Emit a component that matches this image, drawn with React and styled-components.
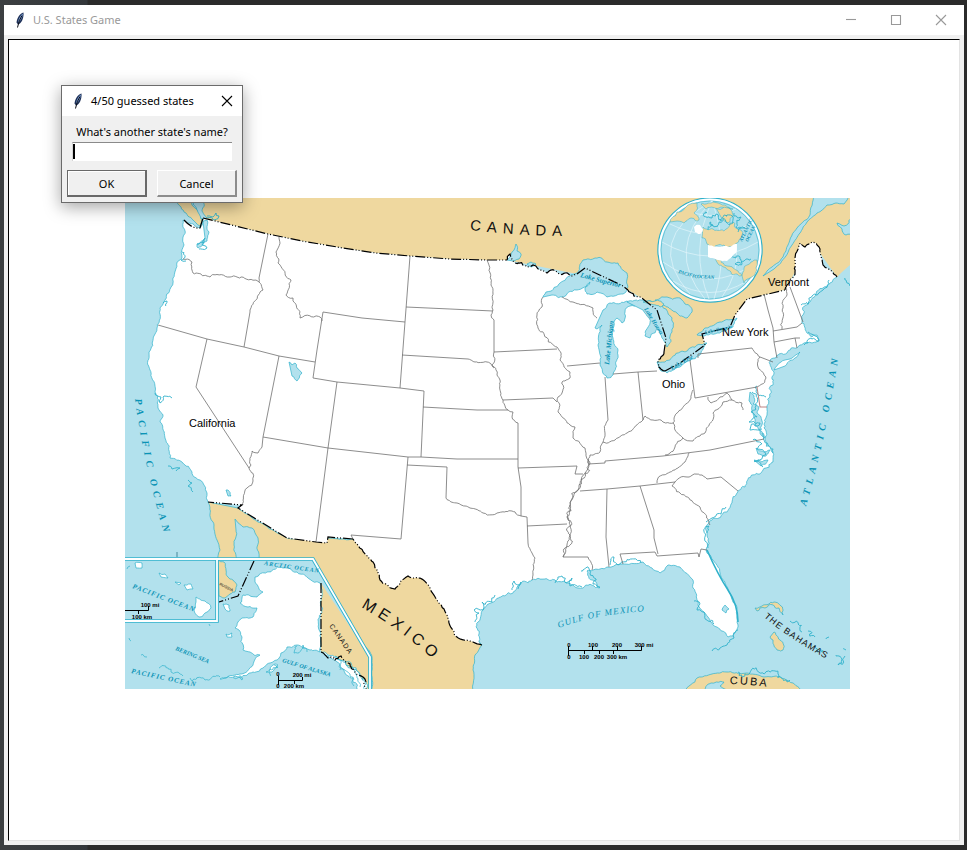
import React from "react";
import styled, { createGlobalStyle } from "styled-components";

const SEA = "#b2e1ed";
const LAND = "#efd89f";
const COAST = "#2fb1cb";
const LABEL_BLUE = "#0b93b5";

const GlobalStyle = createGlobalStyle`
  * { box-sizing: border-box; }
  body { margin: 0; background: #2b2b2b; }
`;

/* ---------- geometry helpers ---------- */

const parse = (text) => text.trim().split(/\s+/).map((pair) => pair.split(",").map(Number));

const noise = (x, y) => {
  const value = Math.sin(x * 12.9898 + y * 78.233) * 43758.5453;
  return (value - Math.floor(value)) * 2 - 1;
};

// Splits every segment into shorter, slightly displaced ones, as on a natural shore or river.
const rough = (text, amount = 0.22) => {
  const points = parse(text);
  const result = [points[0]];
  const split = (a, b) => {
    const length = Math.hypot(b[0] - a[0], b[1] - a[1]);
    if (length < 3) {
      result.push(b);
      return;
    }
    const x = (a[0] + b[0]) / 2;
    const y = (a[1] + b[1]) / 2;
    const reach = Math.min(length, 12) * amount;
    const middle = [x + noise(x, y) * reach, y + noise(y, x) * reach];
    split(a, middle);
    split(middle, b);
  };
  for (let i = 1; i < points.length; i += 1) split(points[i - 1], points[i]);
  return result;
};

const join = (points, closed) =>
  "M" + points.map(([x, y]) => `${x.toFixed(1)} ${y.toFixed(1)}`).join("L") + (closed ? "Z" : "");

const roughLine = (text, amount) => join(rough(text, amount), false);
const roughShape = (text, amount) => join(rough(text, amount), true);
const line = (text) => join(parse(text), false);

/* ---------- map data ---------- */

const parallel = "203,218 268,234 302,241 343,248 376,253 410,256 450,259 487,260 507,260";
const woods = "507,260 510,254 513,260 515,263 527,267 533,265 540,270 547,273 556,271 565,273 577,274";
const lakesBorder = "577,274 585,268 623,286 628,290";
const sault = "628,290 634,296 643,299";
const huronBorder = "643,299 657,310 666,338 664,352";
const detroit = "664,352 658,362 660,368 665,371";
const erieBorder = "665,371 680,363 705,345 702,334 730,327 735,315 747,299 785,290";
const maine = "785,290 787,285 795,272 795,258 800,243 805,247 812,242 817,245 823,265 830,270 837,277";
const atlantic =
  "837,277 830,283 823,288 816,294 810,302 803,315 802,323 807,333 812,337 817,335 819,340 812,343 804,343 800,345 787,353 775,358 770,364 774,372 773,385 770,397 767,407 766,418 764,428 765,440 773,453 773,462 763,470 752,475 745,487 738,491 732,502 723,513 712,520 707,533 706,550";
const florida =
  "706,550 720,573 728,590 737,608 738,627 733,636 728,637 713,625 708,617 698,605 693,588 693,580 680,567 668,565 660,573 652,568 643,562 623,564 607,567 600,569";
const gulf =
  "600,569 593,570 587,571 592,580 600,587 594,586 587,585 578,588 568,583 557,582 545,579 532,580 517,587 500,597 483,610 478,622 479,634 482,645";
const rioGrande =
  "482,645 473,642 455,636 448,617 437,600 430,588 420,578 408,576 402,580 395,589 380,580 373,562 353,539";
const southwest = "353,539 328,537 327,543 316,542 287,538 238,508 242,505 208,502";
const pacific =
  "208,502 207,493 200,480 192,472 182,462 170,458 165,438 160,422 163,415 158,408 155,392 150,370 149,352 157,328 160,308 173,283 182,258 184,245 183,220 200,228 203,218";

const mainland = join(
  [
    ...parse(parallel),
    ...rough(woods),
    ...parse(lakesBorder),
    ...rough(sault),
    ...parse(huronBorder),
    ...rough(detroit),
    ...parse(erieBorder),
    ...rough(maine, 0.15),
    ...rough(atlantic, 0.26),
    ...rough(florida, 0.13),
    ...rough(gulf, 0.24),
    ...rough(rioGrande, 0.14),
    ...parse(southwest),
    ...rough(pacific, 0.16),
  ],
  true
);

const canada = `M192 198 203 218 L${parallel.replace(/,/g, " ")} 577 274 628 290 643 299 666 338 658 362 665 371 705 345 702 334 730 327 747 299 785 290 795 272 812 242 837 277 842 272 850 265 850 198Z`;

const shoreLines = [
  roughLine(atlantic, 0.26),
  roughLine(florida, 0.13),
  roughLine(gulf, 0.24),
  roughLine(pacific, 0.16),
];

const nationalBorders = [
  line(parallel),
  roughLine(woods),
  line(lakesBorder),
  roughLine(sault),
  line(huronBorder),
  roughLine(detroit),
  line(erieBorder),
  roughLine(maine, 0.15),
  roughLine(rioGrande, 0.14),
  line(southwest),
  "M184 220 Q192 229 200 228 L203 218",
];

const straightBorders = [
  "268,234 259,278",
  "250,312 244,347",
  "323,312 362,318 405,322",
  "323,312 317,350 313,378",
  "158,325 207,339 244,347 279,356 315,362",
  "207,339 196,387 249,468",
  "279,356 263,437 262,447",
  "313,378 337,382 400,388 424,391",
  "337,382 328,448 316,542",
  "263,437 328,448 408,457 421,457 457,459 518,459",
  "424,391 421,457",
  "423,407 477,410 508,410",
  "410,256 405,322 400,388",
  "406,307 450,309 493,311",
  "402,355 468,359",
  "494,320 494,352 557,349",
  "518,423 518,467 521,487 521,516 527,517 528,543",
  "503,400 553,398 557,402",
  "518,468 577,466 575,474 583,474",
  "527,526 567,524",
  "408,457 401,539 351,535 353,539",
  "407,465 447,467 446,498",
  "563,557 588,557",
  "567,366 600,363",
  "613,374 638,372 657,371",
  "605,377 608,420",
  "638,372 643,420",
  "690,360 695,398 757,387",
  "698,358 698,354 752,348",
  "764,294 768,310 773,328 774,342 777,358",
  "790,287 803,322",
  "773,331 797,327 802,323",
  "774,342 795,338 800,338",
  "795,338 797,348",
  "588,464 605,463 605,461 663,456 710,450 764,439",
  "580,491 607,489 640,486 675,482",
  "607,489 606,537 609,567",
  "640,486 654,530 654,538 658,554",
  "623,564 620,554 655,552 657,556 698,553 699,557 701,549 707,550",
  "707,479 721,477 738,491",
  "760,357 773,362",
].map(line);

const naturalBorders = [
  "183,259 192,262 193,273 210,277 237,277 259,282",
  "259,278 259,282 263,290 250,310 250,312",
  "279,237 276,252 278,263 291,280 286,295 293,298 300,318 320,317 322,321",
  "262,447 258,453 252,451 251,465 249,468 253,481 247,488 243,500 242,505",
  "468,359 475,362 487,362 494,368",
  "487,260 491,285 493,310 491,315 494,320",
  "494,352 492,365 497,375 500,380 503,400 508,410 513,412 512,417 518,423",
  "528,543 535,558 532,580",
  "543,297 542,307 537,315 538,328 557,347 560,360 570,372 570,378 562,382 562,393 557,400 558,412 570,425 575,427 573,438 585,448 588,460 585,473 578,490 570,503 567,517 570,535 563,557",
  "588,557 592,570",
  "446,498 457,503 470,508 483,513 497,513 512,511 521,516",
  "562,297 573,302 593,308 597,318",
  "608,420 605,433 603,442 600,452 590,455 588,463",
  "603,442 615,440 627,433 643,420 645,416 653,420 663,422 673,423 677,413 690,400 693,390",
  "752,348 760,357 758,367 766,378 757,387",
  "786,288 783,308 782,329",
  "708,397 711,403 720,397 727,393 732,400 742,403 743,410",
  "673,423 675,430 683,438 693,441 705,433 713,413 723,402 732,400",
  "683,438 675,447 665,455",
  "689,453 685,462 670,472 658,478 657,483",
  "675,482 687,477 702,475 707,479",
  "675,482 672,486 680,493 700,507 710,525",
].map((text) => roughLine(text, 0.17));

const riverBorder = roughLine("588,460 585,473 578,490 570,503 567,517 570,535 563,557", 0.34);

const lakes = [
  "543,297 560,283 577,273 583,260 595,258 607,262 618,263 627,273 628,287 623,294 607,297 597,292 587,294 585,288 590,282 577,290 562,297 552,295",
  "603,310 610,303 627,301 637,305 630,306 625,312 622,323 617,318 613,338 618,355 613,375 607,378 600,365 598,345 602,325 597,329 595,328",
  "627,302 643,300 657,302 666,309 672,318 672,332 667,347 662,338 657,328 650,338 645,336 650,323 643,310",
  "655,300 667,297 680,298 685,304 692,312 687,318 677,313 668,307 660,305",
  "657,362 665,362 680,352 690,348 707,343 700,355 680,367 667,373 660,370",
  "697,335 705,328 720,322 737,318 733,327 717,333 704,336",
  "289,362 292,365 295,363 297,368 302,373 297,381 292,376",
  "226,490 228,490 231,496 228,496",
  "722,610 725,605 729,609 726,613",
  "507,260 512,252 516,244 517,251 521,254 519,259 513,261",
  "527,264 531,262 536,264 531,267",
  "203,222 207,220 209,232 207,241 198,248 197,244 205,238",
  "750,392 754,396 753,404 759,407 757,413 762,421 760,431 765,438 759,430 755,419 752,411 749,401",
  "756,448 764,452 770,450 766,456 758,454",
  "754,460 762,462 768,460 761,466",
].map((text) => roughShape(text, 0.17));

const inlets = [
  "752,392 756,406 751,412 757,417 749,422 760,423 750,430 762,429",
  "757,386 757,393 766,397",
  "762,433 768,445 773,453",
  "753,440 762,444 757,449 766,454 754,461 763,467",
  "706,522 712,518 721,514 726,507",
  "707,533 709,526 705,541 708,548",
  "155,393 161,397 160,403 164,396 172,398",
  "475,622 479,613 474,610 484,607 482,602 492,602 495,595",
  "512,590 514,581 517,585 521,582 518,589",
  "555,583 562,576 566,583 572,578 570,586 582,587",
  "581,571 588,567 590,573 596,579 593,584 600,588",
  "610,565 614,557 618,565 629,560 641,563",
  "694,601 700,604 697,610 704,612 708,621 714,624",
  "712,651 720,648 727,645 734,638 738,630",
  "808,332 815,336 819,341 812,339 804,345",
  "801,305 812,296 823,290 829,280",
  "207,216 213,217 216,213 219,216 214,220 207,218",
  "168,466 172,469 180,468 176,471",
  "188,480 192,483 188,486 193,492",
  "182,252 185,257 181,260 186,261",
  "163,303 167,301 166,306",
  "845,278 850,286",
  "197,244 205,238 202,245 207,248 199,249",
].map((text) => roughLine(text, 0.3));

const alaska =
  "255,577 267,572 283,568 297,572 308,578 320,583 320,652 310,650 297,645 287,647 277,660 263,668 253,672 240,677 220,679 240,674 253,665 260,655 250,652 243,650 242,637 235,628 242,618 253,617 257,608 248,607 240,603 243,595 257,597 263,592 255,582";

const islands = [
  "774,632 780,640 783,650 777,650 773,640 770,637",
  "755,608 762,606 769,604 774,602 781,606 783,615 779,608 773,605 765,608 757,611",
].map((text) => roughShape(text, 0.2));

const keys = [
  "790,621 798,624 802,632",
  "808,631 815,637",
  "826,639 829,637",
  "836,655 842,659 838,665 845,656",
  "815,645 823,650",
  "843,649 846,650",
  "738,672 752,669 764,674 778,674 790,680",
].map((text) => roughLine(text, 0.4));

const MapSvg = styled.svg`
  display: block;
  width: 725px;
  max-width: 100%;
  height: auto;
  font-family: "Liberation Sans", Arial, sans-serif;
`;

const Coastline = styled.g`
  fill: ${(p) => p.$fill || "none"};
  stroke: ${COAST};
  stroke-width: ${(p) => p.$weight || 0.7};
  stroke-linejoin: round;
`;

const StateBorder = styled.g`
  fill: none;
  stroke: #707070;
  stroke-width: 0.8;
`;

const NationBorder = styled.g`
  fill: none;
  stroke: #000;
  stroke-width: 1.2;
  stroke-dasharray: 10 2 1 2 1 2;
`;

const WaterLabel = styled.text`
  fill: ${LABEL_BLUE};
  font-family: "Liberation Serif", "Times New Roman", serif;
  font-style: italic;
  font-weight: ${(p) => (p.$bold ? 700 : 400)};
  font-size: ${(p) => p.$size}px;
  letter-spacing: ${(p) => p.$track || 0}px;
`;

const LandLabel = styled.text`
  fill: #111;
  font-size: ${(p) => p.$size}px;
  letter-spacing: ${(p) => p.$track || 0}px;
`;

const ScaleLabel = styled.text`
  fill: #000;
  font-size: 6px;
  font-weight: 700;
  text-anchor: middle;
`;

const StateName = styled.text`
  fill: #000;
  font-size: 11px;
`;

const Globe = () => (
  <g>
    <circle cx="710" cy="250" r="52" fill={SEA} stroke={COAST} strokeWidth="1.4" />
    <circle cx="710" cy="250" r="50.5" fill="none" stroke="#fff" strokeWidth="2" />
    <circle cx="710" cy="250" r="49" fill="none" stroke={COAST} strokeWidth="0.6" />
    <g fill="none" stroke="#e2f5fa" strokeWidth="0.7">
      <path d="M662 242Q710 270 758 242M663 262Q710 296 757 262M673 281Q710 304 747 281M670 224Q710 244 750 224M684 209Q710 222 736 209" />
      <path d="M712 201Q664 250 705 299M712 201Q689 250 709 299M712 201Q730 250 714 299M712 201Q756 250 722 297M712 201Q642 240 690 294" />
    </g>
    <Coastline $fill={LAND} $weight={0.5}>
      <path d={roughShape("670,222 677,212 688,205 697,203 694,213 699,220 691,218 684,223 677,221", 0.2)} />
      <path d={roughShape("703,227 713,229 726,229 733,222 741,230 739,240 733,246 724,245 707,244 702,238", 0.25)} />
      <path d={roughShape("714,257 721,260 727,266 733,268 738,271 743,276 737,274 728,270 718,264", 0.2)} />
      <path d={roughShape("742,276 744,268 751,262 757,260 756,268 750,278 744,283", 0.2)} />
      <path d={roughShape("716,208 724,206 732,211 733,217 727,223 721,217", 0.25)} />
      <path d={roughShape("701,204 713,202 725,205 733,209 719,208 706,209", 0.2)} />
    </Coastline>
    <Coastline $fill="none" $weight={0.9}>
      <path d={roughLine("705,212 712,218 716,214 721,221 727,216 733,223 718,226 710,222 708,230", 0.4)} />
      <path d={roughLine("734,213 741,217 737,222 745,228 738,232", 0.4)} />
      <path d={roughLine("728,259 736,258 742,263 735,264 746,259 751,259", 0.4)} />
    </Coastline>
    <path fill="#fff" d={roughShape("694,227 700,225 703,229 700,234 695,232", 0.15)} />
    <path fill="#fff" d={roughShape("708,245 724,246 730,247 737,244 736,253 731,258 727,261 718,260 708,257", 0.1)} />
    <WaterLabel $size={5} $bold transform="translate(678 273) rotate(16)">PACIFIC</WaterLabel>
    <WaterLabel $size={5} $bold transform="translate(697 278) rotate(3)">OCEAN</WaterLabel>
    <WaterLabel $size={5} $bold transform="translate(742 242) rotate(-64)">ATLANTIC</WaterLabel>
    <WaterLabel $size={5} $bold transform="translate(748 242) rotate(-64)">OCEAN</WaterLabel>
  </g>
);

const AlaskaInset = () => (
  <g>
    <path d="M125 559H313L370 657V689H125Z" fill={SEA} />
    <Coastline $fill={LAND}>
      <path d={roughShape("218,560 224,562 226,570 228,577 233,580 237,585 235,592 230,594 225,598 219,596", 0.15)} />
      <path d="M321 583 370 657V689H366L350 668 337 657 321 652Z" stroke="none" />
    </Coastline>
    <Coastline $fill="#fff">
      <path d={roughShape(alaska, 0.18)} />
      <path d={roughShape("266,672 275,664 278,665 272,672", 0.2)} />
      <path d={roughShape("226,634 232,633 232,637 227,637", 0.2)} />
      <path d={roughShape("223,604 229,605 230,611 225,609", 0.2)} />
      <path d={roughShape("321,652 337,657 350,668 362,679 366,689 357,689 344,671 334,660", 0.25)} />
      <path d={roughShape("196,597 205,601 211,608 207,612 199,617 194,610 196,602", 0.15)} />
      <path d={roughShape("135,563 142,563 142,568 136,568", 0.1)} />
      <path d={roughShape("159,573 165,574 168,578 161,577", 0.2)} />
      <path d={roughShape("184,585 191,584 193,589 187,590", 0.1)} />
      <path d="M175 582 181 583 179 585Z" />
    </Coastline>
    <Coastline>
      {[
        "159,668 171,672 183,676",
        "190,678 205,680 220,677",
        "341,660 350,674 354,686",
        "345,661 360,674 364,689",
        "335,656 347,666 360,687",
        "297,646 294,653 303,645 307,652",
        "270,676 278,667 274,665",
        "233,678 242,680 240,675",
        "141,655 147,657",
        "129,638 131,641",
        "127,569 130,566",
        "209,624 210,626",
      ].map((text) => (
        <path key={text} d={roughLine(text, 0.35)} />
      ))}
    </Coastline>
    <NationBorder>
      <path d="M254 561 238 596 219 602M321 583V652" />
      <path d={roughLine("321,652 331,657 335,660 341,656 350,664 355,672 365,679 366,689", 0.25)} />
    </NationBorder>
    <g fill="none" stroke={COAST} strokeWidth="3.6">
      <path d="M125 559H313L370 657V689M217 559V621H125" />
      <path d="M125 559H313L370 657V689M217 559V621H125" stroke="#fff" strokeWidth="1.8" />
    </g>
    <g fill="none" stroke="#000" strokeWidth="1">
      <path d="M125 610.5H148.500V606M138.500 610V614M278.500 676V685M278 680.500H302.500V677M294.500 680V684" />
    </g>
    <ScaleLabel x="150" y="607">100 mi</ScaleLabel>
    <ScaleLabel x="142" y="619">100 km</ScaleLabel>
    <ScaleLabel x="278" y="676">0</ScaleLabel>
    <ScaleLabel x="302" y="677">200 mi</ScaleLabel>
    <ScaleLabel x="278" y="688">0</ScaleLabel>
    <ScaleLabel x="294" y="688">200 km</ScaleLabel>
    <WaterLabel $size={7} $track={1} $bold transform="translate(132 588) rotate(21)">PACIFIC OCEAN</WaterLabel>
    <WaterLabel $size={7} $track={1} $bold transform="translate(131 673) rotate(12)">PACIFIC OCEAN</WaterLabel>
    <WaterLabel $size={6} $bold transform="translate(175 650) rotate(22)">BERING SEA</WaterLabel>
    <WaterLabel $size={6} $track={1} $bold transform="translate(264 565) rotate(8)">ARCTIC OCEAN</WaterLabel>
    <WaterLabel $size={6} $bold transform="translate(282 662) rotate(17)">GULF OF ALASKA</WaterLabel>
    <LandLabel $size={4} transform="translate(219 585) rotate(27)">RUSSIA</LandLabel>
    <LandLabel $size={7} $track={1} transform="translate(329 626) rotate(55)">CANADA</LandLabel>
  </g>
);

const StatesMap = () => (
  <MapSvg viewBox="125 198 725 491" role="img" aria-label="Blank map of the United States">
    <defs>
      <path id="pacific-curve" d="M135 399Q144 468 168 547" />
      <path id="atlantic-curve" d="M806 506Q827 435 841 340" />
      <path id="canada-curve" d="M470 230Q520 236 575 236" />
      <path id="mexico-curve" d="M361 607Q402 630 438 664" />
      <path id="gulf-curve" d="M559 628Q595 614 650 611" />
      <path id="bahamas-curve" d="M764 617Q790 640 838 665" />
      <path id="cuba-curve" d="M730 684Q748 684 775 688" />
    </defs>
    <rect x="125" y="198" width="725" height="491" fill={SEA} />
    <path d={canada} fill={LAND} />
    <Coastline $fill={LAND}>
      <path d={roughShape("174,196 178,204 186,213 193,220 200,226 202,219 198,211 192,205 189,196", 0.16)} />
      <path
        d={roughShape("208,502 210,514 214,525 217,540 220,550 218,562 313,562 372,657 372,692 473,692 473,670 475,655 482,645 430,580 353,539 287,538 238,508", 0.08)}
      />
      <path d={roughShape("683,692 697,678 712,674 727,672 747,673 764,677 780,677 793,683 806,692", 0.12)} />
    </Coastline>
    <Coastline $fill={SEA}>
      <path d={roughShape("235,519 243,527 252,528 258,538 257,547 261,562 238,562 234,545 236,530", 0.13)} />
      <path d={roughShape("763,276 772,267 783,257 788,245 797,228 810,215 814,194 850,194 844,204 836,203 827,205 817,213 807,222 800,233 792,245 786,256 774,269", 0.08)} />
      <path d={roughShape("852,218 844,226 837,223 842,229 846,235 852,233", 0.15)} />
      <path d={roughShape("703,692 711,683 724,682 720,686 730,692", 0.12)} />
      <path d={roughShape("204,199 202,211 207,218 201,219 193,204 195,199", 0.12)} />
    </Coastline>
    <path d={mainland} fill="#fff" />
    <Coastline>
      {shoreLines.map((d) => <path key={d} d={d} />)}
      <path d="M707 550Q718 575 728 590T738 622" strokeWidth="1.6" />
    </Coastline>
    <Coastline $fill={SEA}>
      {lakes.map((d) => <path key={d} d={d} />)}
    </Coastline>
    <Coastline $weight={0.9}>
      {inlets.map((d) => <path key={d} d={d} />)}
      {keys.map((d) => <path key={d} d={d} />)}
    </Coastline>
    <Coastline $fill="#fff">
      <path d={roughShape("774,370 781,362 790,359 800,352 795,358 785,366", 0.12)} />
    </Coastline>
    <Coastline $fill={LAND}>
      {islands.map((d) => <path key={d} d={d} />)}
      <path d={roughShape("643,302 655,301 664,304 660,307 650,304", 0.2)} />
    </Coastline>
    <StateBorder>
      {straightBorders.map((d) => <path key={d} d={d} />)}
      {naturalBorders.map((d) => <path key={d} d={d} />)}
      <path d={riverBorder} />
      <path d="M757 387 760 407H767" stroke="#a66" />
    </StateBorder>
    <NationBorder>
      {nationalBorders.map((d) => <path key={d} d={d} />)}
    </NationBorder>
    <AlaskaInset />
    <Globe />
    <path d="M177 552V557" stroke="#47889a" />

    <LandLabel $size={15} $track={6}>
      <textPath href="#canada-curve">CANADA</textPath>
    </LandLabel>
    <LandLabel $size={16} $track={5}>
      <textPath href="#mexico-curve">MEXICO</textPath>
    </LandLabel>
    <LandLabel $size={9} $track={1}>
      <textPath href="#bahamas-curve">THE BAHAMAS</textPath>
    </LandLabel>
    <LandLabel $size={11} $track={2}>
      <textPath href="#cuba-curve">CUBA</textPath>
    </LandLabel>
    <WaterLabel $size={10} $track={5} $bold>
      <textPath href="#pacific-curve">PACIFIC OCEAN</textPath>
    </WaterLabel>
    <WaterLabel $size={10} $track={5} $bold>
      <textPath href="#atlantic-curve">ATLANTIC OCEAN</textPath>
    </WaterLabel>
    <WaterLabel $size={9} $track={1}>
      <textPath href="#gulf-curve">GULF OF MEXICO</textPath>
    </WaterLabel>
    <WaterLabel $size={7} $bold transform="translate(580 277) rotate(15)">Lake Superior</WaterLabel>
    <WaterLabel $size={7} $bold transform="translate(609 365) rotate(-84)">Lake Michigan</WaterLabel>
    <WaterLabel $size={6} $bold transform="translate(644 309) rotate(58)">Lake Huron</WaterLabel>
    <WaterLabel $size={6} $bold transform="translate(672 370) rotate(-29)">Lake Erie</WaterLabel>
    <WaterLabel $size={5} $bold transform="translate(705 334) rotate(-12)">Lake Ontario</WaterLabel>

    <path d="M568.500 646V656M568 650.500H641.500V646M592.500 646V650M617.500 646V650M584.500 650V654M599.500 650V654M613.500 650V654" fill="none" stroke="#000" />
    <ScaleLabel x="569" y="647">0</ScaleLabel>
    <ScaleLabel x="593" y="647">100</ScaleLabel>
    <ScaleLabel x="617" y="647">200</ScaleLabel>
    <ScaleLabel x="644" y="647">300 mi</ScaleLabel>
    <ScaleLabel x="569" y="659">0</ScaleLabel>
    <ScaleLabel x="584" y="659">100</ScaleLabel>
    <ScaleLabel x="599" y="659">200</ScaleLabel>
    <ScaleLabel x="617" y="659">300 km</ScaleLabel>

    <StateName x="189" y="427">California</StateName>
    <StateName x="662" y="388">Ohio</StateName>
    <StateName x="722" y="336">New York</StateName>
    <StateName x="768" y="286">Vermont</StateName>
  </MapSvg>
);

/* ---------- windows ---------- */

const Desktop = styled.div`
  min-height: 100vh;
  display: flex;
  padding: 5px 3px 5px 4px;
  background: linear-gradient(90deg, #3c3f41 0, #33373b 87px, #2b2b2b 88px);
  font-family: "Noto Sans", "Segoe UI", sans-serif;
`;

const Window = styled.main`
  position: relative;
  flex: 1;
  display: flex;
  flex-direction: column;
  background: #f0f0f0;
`;

const TitleBar = styled.header`
  display: flex;
  align-items: center;
  height: 30px;
  padding-left: 10px;
  padding-right: ${(p) => (p.$dialog ? 0 : 1)}px;
  background: #fff;
  color: ${(p) => (p.$dialog ? "#000" : "#999")};
`;

const Title = styled.h1`
  flex: 1;
  margin: 0 0 0 6px;
  font-size: 11px;
  font-weight: 400;
  line-height: 16px;
  white-space: nowrap;
`;

const CaptionButton = styled.button`
  display: grid;
  place-items: center;
  width: ${(p) => (p.$narrow ? 31 : 45)}px;
  height: 30px;
  padding: 0;
  border: 0;
  background: none;
  color: inherit;
`;

const Canvas = styled.section`
  flex: 1;
  display: flex;
  align-items: center;
  justify-content: center;
  margin: 4px;
  padding: 7px 0 0 7px;
  border: 1px solid;
  border-color: #000 #e3e3e3 #e3e3e3 #000;
  background: #fff;
`;

const Dialog = styled.form`
  position: absolute;
  left: 57px;
  top: 80px;
  width: 182px;
  border: 1px solid #6b6b6b;
  background: #f0f0f0;
  box-shadow: 0 4px 16px rgba(0, 0, 0, 0.36);
  font-size: 11px;
`;

const DialogBody = styled.div`
  display: flex;
  flex-direction: column;
  padding: 7px 5px 5px;
`;

const Prompt = styled.label`
  line-height: 18px;
  text-align: center;
  white-space: nowrap;
`;

const Field = styled.div`
  position: relative;
  display: flex;
  margin: 1px 5px 9px;

  &::after {
    content: "";
    position: absolute;
    left: 1px;
    top: 2px;
    width: 2px;
    height: 15px;
    background: #000;
  }
`;

const Answer = styled.input`
  width: 100%;
  height: 19px;
  padding: 0 4px;
  border: 0;
  border-top: 1px solid #8a8a8a;
  border-left: 1px solid #d5d5d5;
  outline: 0;
  background: #fff;
  font: inherit;
`;

const Actions = styled.div`
  display: grid;
  grid-template-columns: 1fr 1fr;
  gap: 10px;
`;

const PushButton = styled.button`
  height: 27px;
  padding: 0;
  border: solid;
  border-width: 1px 2px 2px 1px;
  border-color: ${(p) => (p.$primary ? "#696969" : "#fff #8c8c8c #8c8c8c #fff")};
  box-shadow: ${(p) => (p.$primary ? "inset 1px 1px #fff" : "none")};
  background: #f0f0f0;
  color: #000;
  font: inherit;
`;

const Feather = () => (
  <svg width="13" height="16" viewBox="0 0 13 16" aria-hidden="true">
    <path d="M9.500.5C6 1.500 3 5.500 2.500 10.500L4 12.500C7.500 11.500 10 6 9.500.5Z" fill="#1d2f57" />
    <path d="M8.900 1.500C6.500 3 4.500 6.500 3.900 11 6.500 9 8.800 5 8.900 1.500Z" fill="#7fa3d8" />
    <path d="M8 3.500Q4.800 8 3.500 15.500" fill="none" stroke="#0a0d16" strokeWidth="1" />
  </svg>
);

const CaptionGlyph = ({ d }) => (
  <svg width="12" height="12" viewBox="0 0 12 12" aria-hidden="true">
    <path d={d} fill="none" stroke="currentColor" strokeWidth="1.1" />
  </svg>
);

const CROSS = "M1 1 11 11M11 1 1 11";

export default function App() {
  return (
    <>
      <GlobalStyle />
      <Desktop>
        <Window>
          <TitleBar>
            <Feather />
            <Title>U.S. States Game</Title>
            <CaptionButton type="button" aria-label="Minimize">
              <CaptionGlyph d="M1 5.500H11" />
            </CaptionButton>
            <CaptionButton type="button" aria-label="Maximize">
              <CaptionGlyph d="M1.500 1.500H10.500V10.500H1.500Z" />
            </CaptionButton>
            <CaptionButton type="button" aria-label="Close">
              <CaptionGlyph d={CROSS} />
            </CaptionButton>
          </TitleBar>
          <Canvas>
            <StatesMap />
          </Canvas>
          <Dialog onSubmit={(event) => event.preventDefault()}>
            <TitleBar as="div" $dialog>
              <Feather />
              <Title as="h2">4/50 guessed states</Title>
              <CaptionButton type="button" aria-label="Close dialog" $narrow>
                <CaptionGlyph d={CROSS} />
              </CaptionButton>
            </TitleBar>
            <DialogBody>
              <Prompt htmlFor="answer">What's another state's name?</Prompt>
              <Field>
                <Answer id="answer" type="text" autoComplete="off" />
              </Field>
              <Actions>
                <PushButton type="submit" $primary>OK</PushButton>
                <PushButton type="button">Cancel</PushButton>
              </Actions>
            </DialogBody>
          </Dialog>
        </Window>
      </Desktop>
    </>
  );
}
